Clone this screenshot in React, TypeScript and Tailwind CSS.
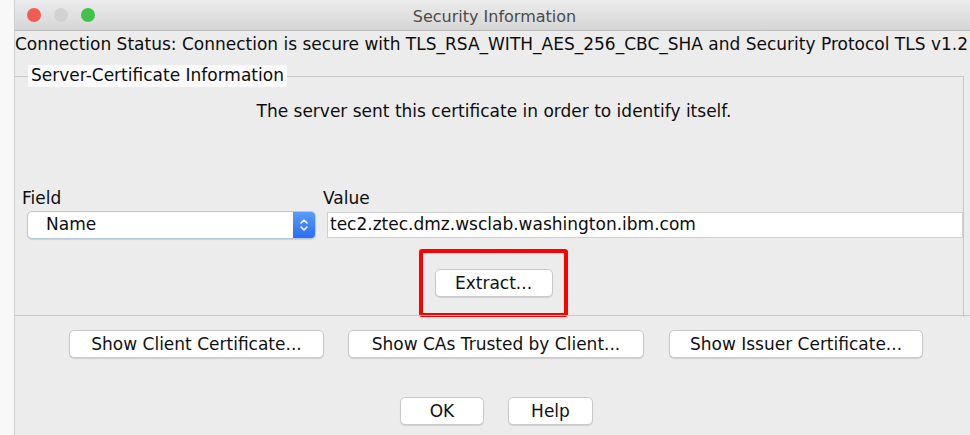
import React from 'react';

const font = { fontFamily: '"DejaVu Sans", "Open Sans", sans-serif' };

const MacButton = ({ label, className = '' }: any) => (
  <button
    className={`h-[28px] rounded-[5px] bg-white border border-[#c9c9c9] shadow-[0_1px_1px_rgba(0,0,0,0.12)] text-[17px] leading-[20px] text-[#111] flex items-center justify-center ${className}`}
  >
    {label}
  </button>
);

const TrafficLights = () => (
  <div className="flex items-center gap-[13px] pl-[12px]">
    <span className="w-[14px] h-[14px] rounded-full bg-[#f25c54]" />
    <span className="w-[14px] h-[14px] rounded-full bg-[#d2d2d2]" />
    <span className="w-[14px] h-[14px] rounded-full bg-[#3fc14a]" />
  </div>
);

const FieldSelect = () => (
  <div className="w-[289px] h-[28px] rounded-[5px] bg-white border border-[#b9c7dc] shadow-[0_1px_1px_rgba(0,0,0,0.12)] flex items-stretch overflow-hidden">
    <span className="flex-1 pl-[18px] flex items-center text-[17px] text-[#0d0d0d]">Name</span>
    <span className="w-[22px] bg-gradient-to-b from-[#5a9bf8] to-[#2a6ef0] flex items-center justify-center">
      <svg width="10" height="16" viewBox="0 0 10 16" fill="none" stroke="white" strokeWidth="1.6" strokeLinecap="round" strokeLinejoin="round">
        <path d="M2 6 L5 3 L8 6" />
        <path d="M2 10 L5 13 L8 10" />
      </svg>
    </span>
  </div>
);

export default function App() {
  return (
    <div className="w-[970px] h-[435px] flex bg-[#f8f8f8] overflow-hidden" style={font}>
      <div className="w-[14px]" />
      <div className="flex-1 flex flex-col bg-[#ececec] border-l border-[#cfcfcf] text-[#0d0d0d]">
        {/* title bar */}
        <div className="h-[31px] flex items-center relative bg-gradient-to-b from-[#ececec] to-[#d6d6d6] border-b border-[#b8b8b8]">
          <TrafficLights />
          <div className="absolute inset-0 flex items-center justify-center pl-[4px] pt-[3px] text-[16px] text-[#4b4b4b]">
            Security Information
          </div>
        </div>

        {/* connection status */}
        <div className="h-[28px] flex items-center text-[17px] whitespace-nowrap">
          Connection Status: Connection is secure with TLS_RSA_WITH_AES_256_CBC_SHA and Security Protocol TLS v1.2
        </div>

        {/* server certificate group */}
        <div className="mt-[17px] mr-[6px] border-t border-r border-[#c8c8c8] flex flex-col">
          <div className="-mt-[12px] ml-[13px] self-start bg-[#fafafa] px-[3px] h-[22px] flex items-center text-[17px]">
            Server-Certificate Information
          </div>
          <div className="mt-[13px] h-[24px] flex items-center justify-center pl-[10px] text-[17px]">
            The server sent this certificate in order to identify itself.
          </div>

          <div className="mt-[63px] h-[24px] flex items-center text-[17px]">
            <span className="w-[308px] pl-[7px]">Field</span>
            <span>Value</span>
          </div>
          <div className="mt-[0px] flex items-center">
            <div className="pl-[12px] pr-[11px]">
              <FieldSelect />
            </div>
            <div className="flex-1 h-[26px] bg-white border border-[#d0d0d0] flex items-center pl-[2px] text-[17px]">
              tec2.ztec.dmz.wsclab.washington.ibm.com
            </div>
          </div>

          <div className="mt-[10px] flex">
            <div className="ml-[404px] w-[149px] h-[68px] border-[4px] border-[#ff0000] rounded-[3px] flex items-center justify-center">
              <MacButton label="Extract..." className="w-[118px]" />
            </div>
          </div>
        </div>

        {/* bottom area */}
        <div className="-mt-[2px] border-t border-[#c8c8c8] flex-1 flex flex-col">
          <div className="mt-[14px] flex">
            <MacButton label="Show Client Certificate..." className="ml-[54px] w-[255px]" />
            <MacButton label="Show CAs Trusted by Client..." className="ml-[24px] w-[296px]" />
            <MacButton label="Show Issuer Certificate..." className="ml-[25px] w-[254px]" />
          </div>
          <div className="mt-[39px] flex">
            <MacButton label="OK" className="ml-[385px] w-[84px] h-[27px]" />
            <MacButton label="Help" className="ml-[24px] w-[85px] h-[27px]" />
          </div>
        </div>
      </div>
    </div>
  );
}
